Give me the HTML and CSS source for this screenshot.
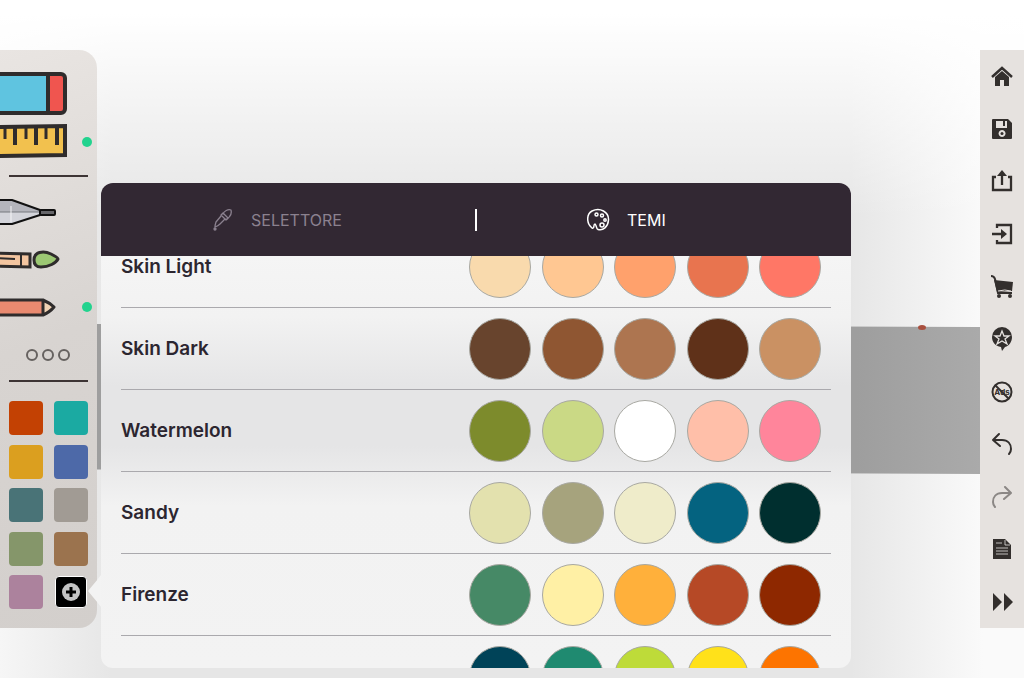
FILE: index.html
```html
<!DOCTYPE html>
<html lang="it">
<head>
    <meta charset="UTF-8">
    <meta name="viewport" content="width=device-width, initial-scale=1.0">
    <title>Temi</title>
    <link rel="stylesheet" href="styles.css">
</head>
<body>
    <div class="app">
        <aside class="tools">
            <button type="button" class="tool" aria-label="Gomma">
                <svg viewBox="0 0 97 48">
                    <rect x="-10" y="5" width="75" height="39" rx="4" fill="#5fc4e0"/>
                    <path d="M48 5h13q4 0 4 4v31q0 4-4 4H48z" fill="#f0554f"/>
                    <path d="M48 5v39" stroke="#2f2c2c" stroke-width="4"/>
                    <rect x="-10" y="5" width="75" height="39" rx="4" fill="none" stroke="#2f2c2c" stroke-width="4"/>
                </svg>
            </button>
            <button type="button" class="tool" aria-label="Righello">
                <svg viewBox="0 0 97 48">
                    <path d="M-6 10L65 9V38L-6 39z" fill="#f2c14e" stroke="#2f2c2c" stroke-width="4"/>
                    <path d="M5 10v12M26 10v12M46 10v12" stroke="#2f2c2c" stroke-width="3"/>
                    <path d="M15 10v18M36 10v18M57 10v18" stroke="#2f2c2c" stroke-width="4"/>
                    <circle cx="87" cy="25" r="5" fill="#22d38e"/>
                </svg>
            </button>
            <hr>
            <button type="button" class="tool" aria-label="Penna">
                <svg viewBox="0 0 97 48">
                    <path d="M-6 12H12L40 22V27L12 36H-6z" fill="#d3d4da"/>
                    <path d="M-6 12H12L40 22V24H-6z" fill="#b4b5bc"/>
                    <path d="M-6 24H40" stroke="#77787f"/>
                    <path d="M11 18v16" stroke="#f4f4f6"/>
                    <path d="M-6 12H12L40 22V27L12 36H-6z" fill="none" stroke="#111" stroke-width="2" stroke-linejoin="round"/>
                    <rect x="40" y="22" width="15" height="5" rx="1" fill="#66666a" stroke="#111" stroke-width="2"/>
                </svg>
            </button>
            <button type="button" class="tool" aria-label="Pennello">
                <svg viewBox="0 0 97 48">
                    <path d="M-6 17L30 18V31L-6 30z" fill="#f3c5a0" stroke="#2f2c2c" stroke-width="3"/>
                    <path d="M-6 22L15 23M21 18v12" stroke="#2f2c2c" stroke-width="2"/>
                    <path d="M34 24C34 16 43 14 51 18C55 20 58 22 58 23C56 27 49 31 41 31C36 31 34 28 34 24z" fill="#9cc873" stroke="#2f2c2c" stroke-width="3" stroke-linejoin="round"/>
                </svg>
            </button>
            <button type="button" class="tool" aria-label="Matita">
                <svg viewBox="0 0 97 48">
                    <path d="M-6 16H43V31H-6z" fill="#e98a70"/>
                    <path d="M43 16L54 23L43 31z" fill="#f0d3b4"/>
                    <path d="M-6 16H43Q50 19 54 23Q50 28 43 31H-6M43 16v15" fill="none" stroke="#2f2c2c" stroke-width="3" stroke-linejoin="round"/>
                    <circle cx="87" cy="23" r="5" fill="#22d38e"/>
                </svg>
            </button>
            <button type="button" class="tool" aria-label="Altro">
                <svg viewBox="0 0 97 48" fill="none" stroke="#666260" stroke-width="2">
                    <circle cx="32" cy="23" r="5"/>
                    <circle cx="48" cy="23" r="5"/>
                    <circle cx="64" cy="23" r="5"/>
                </svg>
            </button>
            <hr>
            <div class="swatches">
                <button type="button" class="swatch rust" aria-label="Ruggine"></button>
                <button type="button" class="swatch teal" aria-label="Turchese"></button>
                <button type="button" class="swatch ochre" aria-label="Ocra"></button>
                <button type="button" class="swatch blue" aria-label="Blu"></button>
                <button type="button" class="swatch petrol" aria-label="Petrolio"></button>
                <button type="button" class="swatch grey" aria-label="Grigio"></button>
                <button type="button" class="swatch sage" aria-label="Salvia"></button>
                <button type="button" class="swatch brown" aria-label="Marrone"></button>
                <button type="button" class="swatch mauve" aria-label="Malva"></button>
                <button type="button" class="swatch add" aria-label="Aggiungi colore">
                    <svg width="18" height="18" viewBox="0 0 18 18">
                        <circle cx="9" cy="9" r="9" fill="#c4c4c4"/>
                        <path d="M9 4v10M4 9h10" stroke="#000" stroke-width="3"/>
                    </svg>
                </button>
            </div>
        </aside>

        <main class="canvas">
            <div class="stroke"></div>
            <span class="pin"></span>

            <section class="popover">
                <header class="tabs">
                    <button type="button" class="tab">
                        <svg width="24" height="24" viewBox="0 0 24 24" fill="none" stroke="currentColor" stroke-width="1.300" stroke-linecap="round" stroke-linejoin="round">
                            <path d="M12 6C13 3 17 1 20 2C21 5 20 8 16 11"/>
                            <path d="M12 5L17 10L15 12L10 7z"/>
                            <path d="M10 8L5 14Q4 17 4 19Q7 18 9 16L14 11"/>
                            <circle cx="4" cy="21" r="1" fill="currentColor"/>
                        </svg>
                        SELETTORE
                    </button>
                    <span class="separator"></span>
                    <button type="button" class="tab active">
                        <svg width="24" height="24" viewBox="0 0 24 24" fill="none" stroke="currentColor" stroke-width="1.500" stroke-linejoin="round">
                            <path d="M5 20C-1 15-.5 6 5 3C13-1 22 4 21.500 12C21 19 16 23 11 21.500C9 21 10 18 8 16C6 16 8 21 5 20z"/>
                            <circle cx="9.500" cy="6.500" r="1.500"/>
                            <circle cx="15" cy="7.500" r="1.500"/>
                            <circle cx="18" cy="12" r="1.200"/>
                            <circle cx="15" cy="17" r="2"/>
                        </svg>
                        TEMI
                    </button>
                </header>
                <div class="viewport">
                    <ul class="themes" id="themes"></ul>
                </div>
            </section>
        </main>

        <nav class="actions">
            <button type="button" aria-label="Home">
                <svg viewBox="0 0 24 24"><path d="M2 13L12 4l10 9" fill="none" stroke="#332f2d" stroke-width="2.500"/><path d="M12 7l7 6v9h-5v-6h-4v6H5v-9z"/></svg>
            </button>
            <button type="button" aria-label="Salva">
                <svg viewBox="0 0 24 24"><path fill-rule="evenodd" d="M3 2h15l4 4v15q0 1-1 1H3q-1 0-1-1V3q0-1 1-1zM6 4v7h11V4h-2v5h-2V4zM12 13a3.500 3.500 0 1 0 .1 0z"/><circle cx="12" cy="16.500" r="1.500"/></svg>
            </button>
            <button type="button" aria-label="Condividi">
                <svg viewBox="0 0 24 24"><path d="M6 8H3v13h18V8h-3M12 16V5" fill="none" stroke="#332f2d" stroke-width="2.300"/><path d="M12 1l5 6H7z"/></svg>
            </button>
            <button type="button" aria-label="Importa">
                <svg viewBox="0 0 24 24"><path d="M7 6V3h14v18H7v-3M2 12h11" fill="none" stroke="#332f2d" stroke-width="2.300"/><path d="M11 7l6 5-6 5z"/></svg>
            </button>
            <button type="button" aria-label="Negozio">
                <svg viewBox="0 0 24 24"><path d="M4 6l19 2-1 9-15 1z"/><path d="M1 2q3 0 4 3l3 14h14" fill="none" stroke="#332f2d" stroke-width="2"/><path d="M8 17q7-2 13 0" fill="none" stroke="#e6e2df"/><circle cx="9" cy="22" r="2"/><circle cx="20" cy="22" r="2"/></svg>
            </button>
            <button type="button" aria-label="Preferiti">
                <svg viewBox="0 0 24 24"><path d="M12 0a10 10 0 0 1 10 10c0 5-3 9-7 10l-3 4-1-4C5 19 2 15 2 10A10 10 0 0 1 12 0z"/><path d="M12 4l2 5h5l-4 3 2 5-5-3-5 3 2-5-4-3h5z" fill="none" stroke="#e6e2df" stroke-width="1.300"/></svg>
            </button>
            <button type="button" aria-label="Niente pubblicità">
                <svg viewBox="0 0 24 24"><circle cx="12" cy="12" r="9.500" fill="none" stroke="#332f2d" stroke-width="2"/><text x="12" y="15" text-anchor="middle" class="ads">Ads</text><path d="M5 5l14 14" stroke="#332f2d" stroke-width="2"/></svg>
            </button>
            <button type="button" aria-label="Annulla">
                <svg viewBox="0 0 24 24" class="line"><path d="M9 2L3 8l7 6M3 8h9c6 0 9 4 9 9 0 2-1 4-2 5"/></svg>
            </button>
            <button type="button" aria-label="Ripeti" disabled>
                <svg viewBox="0 0 24 24" class="line"><path d="M15 2l6 6-7 6M21 8h-9c-6 0-9 4-9 9 0 2 1 4 2 5"/></svg>
            </button>
            <button type="button" aria-label="Documento">
                <svg viewBox="0 0 24 24"><path d="M3 2h12l6 6v14H3z"/><path d="M6 6h6M6 11h12M6 14h12M6 17h12M15 3v5h5" fill="none" stroke="#e6e2df" stroke-width=".8"/></svg>
            </button>
            <button type="button" aria-label="Avanti">
                <svg viewBox="0 0 24 24"><path d="M3 3l9 9-9 9zM14 3l9 9-9 9z"/></svg>
            </button>
        </nav>
    </div>

    <script>
        const themes = [
            { name: 'Skin Light', colors: ['#f9daad', '#ffc792', '#ffa16c', '#e8744f', '#ff7766'] },
            { name: 'Skin Dark', colors: ['#68442d', '#8f5632', '#ad7550', '#5f3119', '#ca9163'] },
            { name: 'Watermelon', colors: ['#7d8b2c', '#cad985', '#ffffff', '#ffbfa9', '#ff859b'] },
            { name: 'Sandy', colors: ['#e3e1ae', '#a6a37d', '#efecca', '#046380', '#002f2f'] },
            { name: 'Firenze', colors: ['#468966', '#fff0a5', '#ffb03b', '#b64926', '#8e2800'] },
            { name: '', colors: ['#004358', '#1f8a70', '#bedb39', '#ffe11a', '#fd7400'] }
        ];

        document.getElementById('themes').innerHTML = themes.map(theme => `
            <li class="theme">
                <span class="name">${theme.name}</span>
                <span class="palette">
                    ${theme.colors.map(c => `<button type="button" class="color" aria-label="${c}" style="background-color: ${c}"></button>`).join('')}
                </span>
            </li>`).join('');
    </script>
</body>
</html>
```
FILE: styles.css
```css
* {
    box-sizing: border-box;
}
body {
    margin: 0;
    font-family: Inter, "Liberation Sans", sans-serif;
    color: #2c2630;
    background:
        linear-gradient(to bottom, #fff 2%, rgba(255, 255, 255, 0) 32%),
        linear-gradient(to left, #fafafa 4%, rgba(250, 250, 250, 0) 17%),
        linear-gradient(to right, #f6f6f6 0%, rgba(246, 246, 246, 0) 11%),
        #e6e6e6;
}
button {
    padding: 0;
    border: none;
    background: none;
    font: inherit;
    color: inherit;
    cursor: pointer;
}
svg {
    display: block;
}
.app {
    display: grid;
    grid-template-columns: 97px 1fr 44px;
    height: 100vh;
    min-height: 678px;
    overflow: hidden;
}

/* left toolbar */
.tools {
    display: flex;
    flex-direction: column;
    margin: 50px 0;
    padding-top: 19px;
    border-radius: 0 18px 18px 0;
    background: linear-gradient(160deg, #e9e5e2, #d8d4d1 50%, #d3cfcc);
}
.tool svg {
    width: 97px;
    height: 48px;
}
.tools hr {
    width: 79px;
    height: 2px;
    margin: 10px 9px 11px;
    border: none;
    background: #3d3434;
}
.tool + hr:nth-of-type(2) {
    margin: 0 9px 19px;
}
.swatches {
    display: grid;
    grid-template-columns: 34px 34px;
    justify-content: space-between;
    align-content: space-between;
    height: 208px;
    padding: 0 9px;
}
.swatch {
    width: 34px;
    height: 34px;
    border-radius: 4px;
}
.rust { background: #c34103; }
.teal { background: #1baaa2; }
.ochre { background: #db9f1f; }
.blue { background: #4d69a8; }
.petrol { background: #497377; }
.grey { background: #a19b94; }
.sage { background: #85966a; }
.brown { background: #9b734e; }
.mauve { background: #ac829d; }
.add {
    display: flex;
    align-items: center;
    justify-content: center;
    width: 32px;
    height: 32px;
    margin: 1px;
    border: 1px solid #fff;
    background: #000;
}

/* drawing area */
.canvas {
    position: relative;
}
.stroke {
    position: absolute;
    top: 324px;
    left: 0;
    right: 0;
    height: 150px;
    background: linear-gradient(to right, #9e9e9e 86%, #aaa);
    clip-path: polygon(0 0, 100% 2%, 100% 100%, 0 97%);
}
.pin {
    position: absolute;
    top: 325px;
    right: 54px;
    width: 8px;
    height: 5px;
    border-radius: 50%;
    background: #a9503f;
}

/* theme popover */
.popover {
    position: absolute;
    top: 183px;
    right: 129px;
    bottom: 10px;
    left: 4px;
    display: flex;
    flex-direction: column;
}
.popover::before {
    content: "";
    position: absolute;
    bottom: 61px;
    left: -13px;
    width: 13px;
    height: 32px;
    background: #f3f3f3;
    clip-path: polygon(0 50%, 70% 16%, 100% 0, 100% 100%, 70% 84%);
}
.tabs {
    display: grid;
    grid-template-columns: 1fr 2px 1fr;
    align-items: center;
    height: 73px;
    border-radius: 12px 12px 0 0;
    background: #322833;
}
.tab {
    display: flex;
    align-items: center;
    gap: 16px;
    height: 100%;
    padding-left: 110px;
    font-size: 16px;
    color: #8b818f;
}
.tab.active {
    color: #fff;
}
.separator {
    height: 22px;
    background: #fff;
}
.viewport {
    flex: 1;
    overflow: hidden;
    border-radius: 0 0 12px 12px;
    background: linear-gradient(to bottom, #f5f5f5 0, #f2f2f2 60px, #e5e5e6 130px, #e5e5e6 190px, #f2f2f2 250px, #f3f3f3);
}
.themes {
    margin: -30px 20px 0;
    padding: 0;
    list-style: none;
}
.theme {
    display: flex;
    align-items: center;
    justify-content: space-between;
    height: 82px;
    border-bottom: 1px solid #aaa9ad;
}
.name {
    font-size: 19px;
    font-weight: 600;
}
.palette {
    display: flex;
    justify-content: space-between;
    width: 352px;
    margin-right: 10px;
}
.color {
    width: 62px;
    height: 62px;
    border: 1px solid #a8a8a2;
    border-radius: 50%;
}

/* right toolbar */
.actions {
    display: flex;
    flex-direction: column;
    margin: 50px 0;
    background: #e6e2df;
}
.actions button {
    flex: 1;
    display: flex;
    align-items: center;
    justify-content: center;
}
.actions svg {
    width: 24px;
    height: 24px;
    fill: #332f2d;
}
.actions .line {
    fill: none;
    stroke: #332f2d;
    stroke-width: 2;
    stroke-linecap: round;
    stroke-linejoin: round;
}
.actions button:disabled {
    opacity: 0.5;
}
.ads {
    font-size: 8px;
    font-weight: 700;
}
```
